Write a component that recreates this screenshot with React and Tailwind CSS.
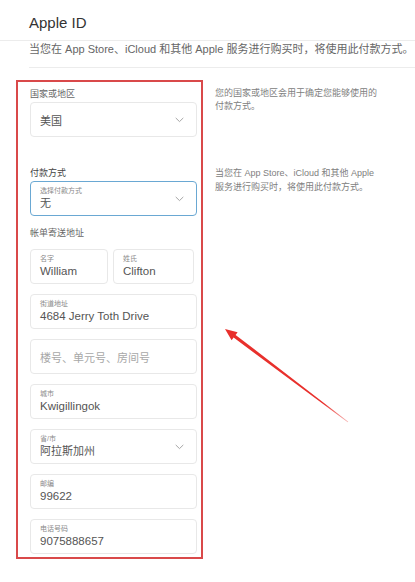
import React from 'react';

const Chevron = () => (
  <svg width="9" height="6" viewBox="0 0 9 6" className="shrink-0">
    <path d="M1 1.2 L4.5 4.6 L8 1.2" fill="none" stroke="#a5a5a5" strokeWidth="1" strokeLinecap="round" strokeLinejoin="round" />
  </svg>
);

const Field = ({ label, value, cjk, select, focused, placeholder, className = '' }) => {
  const border = focused ? 'border-[1.5px] border-[#6aa8d3]' : 'border border-[#e8e8e8]';
  return (
    <div className={`h-[35px] rounded-[4px] ${border} flex items-center pl-[9px] pr-[12px] ${className}`}>
      <div className="flex-1 min-w-0">
        {label ? (
          <div className="flex flex-col">
            <span className="text-[7px] leading-[10px] text-[#8a8a8a]">{label}</span>
            <span className={`${cjk ? 'text-[11px]' : 'text-[11.5px]'} leading-[15px] text-[#555]`}>{value}</span>
          </div>
        ) : (
          <span className={`${cjk ? 'text-[11px]' : 'text-[11.5px]'} leading-[15px] ${placeholder ? 'text-[#a8a8a8]' : 'text-[#555]'}`}>
            {value}
          </span>
        )}
      </div>
      {select && <Chevron />}
    </div>
  );
};

const Arrow = () => (
  <svg className="absolute left-0 top-0 pointer-events-none" width="415" height="582" viewBox="0 0 415 582">
    <defs>
      <linearGradient id="fade" x1="225" y1="329" x2="348" y2="422" gradientUnits="userSpaceOnUse">
        <stop offset="0" stopColor="#e8302c" />
        <stop offset="0.8" stopColor="#e8302c" />
        <stop offset="1" stopColor="#e8302c" stopOpacity="0.35" />
      </linearGradient>
    </defs>
    <polygon
      points="225,329 237.6,332.2 235.6,334.9 348.3,421.7 347.7,422.3 233.6,337.5 231.6,340.2"
      fill="url(#fade)"
    />
  </svg>
);

export default function App() {
  return (
    <div className="relative w-[415px] h-[582px] overflow-hidden bg-white font-['Liberation_Sans','Noto_Sans_CJK_SC',sans-serif]">
      <div className="pl-[29px] pt-[14px] pb-[8px] border-b border-[#ececec]">
        <h1 className="text-[15px] leading-[18px] text-[#333]">Apple ID</h1>
      </div>
      <div className="ml-[29px] pt-[1px] pb-[10px] border-b border-[#ececec]">
        <p className="text-[11px] leading-[15px] text-[#666] whitespace-nowrap">
          当您在 App Store、iCloud 和其他 Apple 服务进行购买时，将使用此付款方式。
        </p>
      </div>

      <div className="flex mt-[12px] ml-[16px] gap-[12px]">
        <div className="w-[187px] border-2 border-[#d9494a] pl-[12px] pr-[4px] pt-[6px] pb-[3px] flex flex-col">
          <span className="text-[9px] leading-[12px] text-[#666]">国家或地区</span>
          <Field value="美国" cjk select className="mt-[2px]" />

          <span className="mt-[30px] text-[9px] leading-[13px] text-[#444]">付款方式</span>
          <Field label="选择付款方式" value="无" cjk select focused className="mt-[1px]" />

          <span className="mt-[11px] text-[9px] leading-[13px] text-[#666]">帐单寄送地址</span>
          <div className="mt-[9px] flex flex-col gap-[10px]">
            <div className="grid grid-cols-[78px_1fr] gap-[5px] pr-[3px]">
              <Field label="名字" value="William" />
              <Field label="姓氏" value="Clifton" />
            </div>
            <Field label="街道地址" value="4684 Jerry Toth Drive" />
            <Field value="楼号、单元号、房间号" cjk placeholder />
            <Field label="城市" value="Kwigillingok" />
            <Field label="省/市" value="阿拉斯加州" cjk select />
            <Field label="邮编" value="99622" />
            <Field label="电话号码" value="9075888657" />
          </div>
        </div>

        <div className="pt-[7px] text-[9px] text-[#808080]">
          <p className="leading-[13px]">
            您的国家或地区会用于确定您能够使用的
            <br />
            付款方式。
          </p>
          <p className="mt-[53px] leading-[14px] whitespace-nowrap">
            当您在 App Store、iCloud 和其他 Apple
            <br />
            服务进行购买时，将使用此付款方式。
          </p>
        </div>
      </div>

      <Arrow />
    </div>
  );
}
